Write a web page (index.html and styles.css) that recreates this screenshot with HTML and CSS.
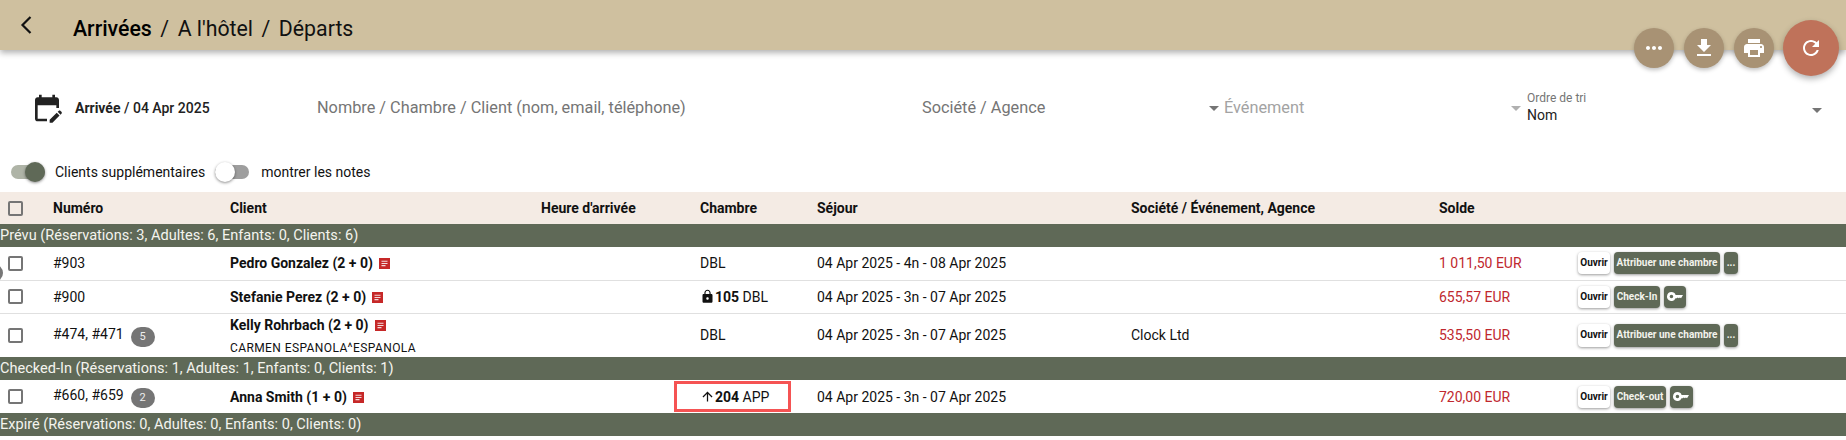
FILE: index.html
```html
<!DOCTYPE html>
<html lang="fr">
<head>
<meta charset="utf-8">
<title>Arrivées</title>
<link rel="stylesheet" href="styles.css">
</head>
<body>
<header class="topbar">
  <svg class="back" viewBox="0 0 12 18"><path d="M10.5 1 2.5 9l8 8" fill="none" stroke="#111" stroke-width="2.2"/></svg>
  <nav class="crumbs"><b>Arrivées</b><i>/</i><span>A l'hôtel</span><i>/</i><span>Départs</span></nav>
</header>
<div class="fabs">
  <button class="fab"><svg viewBox="0 0 24 24"><path d="M6 10c-1.1 0-2 .9-2 2s.9 2 2 2 2-.9 2-2-.9-2-2-2zm12 0c-1.1 0-2 .9-2 2s.9 2 2 2 2-.9 2-2-.9-2-2-2zm-6 0c-1.1 0-2 .9-2 2s.9 2 2 2 2-.9 2-2-.9-2-2-2z"/></svg></button>
  <button class="fab"><svg viewBox="0 0 24 24"><path d="M19 9h-4V3H9v6H5l7 7 7-7zM5 18v2h14v-2H5z"/></svg></button>
  <button class="fab"><svg viewBox="0 0 24 24"><path d="M19 8H5c-1.66 0-3 1.34-3 3v6h4v4h12v-4h4v-6c0-1.66-1.34-3-3-3zm-3 11H8v-5h8v5zm3-7c-.55 0-1-.45-1-1s.45-1 1-1 1 .45 1 1-.45 1-1 1zm-1-9H6v4h12V3z"/></svg></button>
  <button class="fab fab-main"><svg viewBox="0 0 24 24"><path d="M17.65 6.35C16.2 4.9 14.21 4 12 4c-4.42 0-7.99 3.58-7.99 8s3.57 8 7.99 8c3.73 0 6.84-2.55 7.73-6h-2.08c-.82 2.33-3.04 4-5.65 4-3.31 0-6-2.69-6-6s2.69-6 6-6c1.66 0 3.14.69 4.22 1.78L13 11h7V4l-2.35 2.35z"/></svg></button>
</div>
<span class="edge-dot"></span>

<section class="filters">
  <div class="f-date">
    <svg class="cal" viewBox="0 0 24 24"><path d="M5 10h14v2h2V6c0-1.1-.9-2-2-2h-1V2h-2v2H8V2H6v2H5c-1.11 0-1.99.9-1.99 2L3 20c0 1.1.89 2 2 2h7v-2H5V10zm17.84 6.28-.71.71-2.12-2.12.71-.71c.39-.39 1.02-.39 1.41 0l.71.71c.39.39.39 1.02 0 1.41zm-3.54-.7 2.12 2.12-5.3 5.3H14v-2.12l5.3-5.3z"/></svg>
    <span class="date-text"><b>Arrivée</b> / 04 Apr 2025</span>
  </div>
  <div class="f-search">Nombre / Chambre / Client (nom, email, téléphone)</div>
  <div class="f-company">Société / Agence<span class="caret"></span></div>
  <div class="f-event">Événement<span class="caret caret-light"></span></div>
  <div class="f-sort">
    <div class="sort-text"><small>Ordre de tri</small><span>Nom</span></div>
    <span class="caret"></span>
  </div>
</section>

<section class="toggles">
  <span class="toggle on"><span class="thumb"></span></span>
  <span class="t-label">Clients supplémentaires</span>
  <span class="toggle off"><span class="thumb"></span></span>
  <span class="t-label">montrer les notes</span>
</section>

<table class="grid">
  <colgroup>
    <col class="c1"><col class="c2"><col class="c3"><col class="c4"><col class="c5"><col class="c6"><col class="c7"><col class="c8"><col class="c9">
  </colgroup>
  <thead>
    <tr>
      <th class="chk"><span class="box"></span></th>
      <th>Numéro</th><th>Client</th><th>Heure d'arrivée</th><th>Chambre</th><th>Séjour</th><th>Société / Événement, Agence</th><th>Solde</th><th></th>
    </tr>
  </thead>
  <tbody>
    <tr class="group"><td colspan="9">Prévu (Réservations: 3, Adultes: 6, Enfants: 0, Clients: 6)</td></tr>
    <tr class="row">
      <td class="chk"><span class="box"></span></td>
      <td>#903</td>
      <td><b>Pedro Gonzalez (2 + 0)</b><svg class="note" viewBox="0 0 11 11"><path d="M0 0h11v11H0z" fill="#c62828"/><path d="M2.5 2.7h6v1.1h-6zM2.5 4.9h6V6h-6zM2.5 7.1h4v1.1h-4z" fill="#f3dcdc"/></svg></td>
      <td></td>
      <td>DBL</td>
      <td>04 Apr 2025 - 4n - 08 Apr 2025</td>
      <td></td>
      <td class="due">1 011,50 EUR</td>
      <td><div class="acts"><button class="btn light">Ouvrir</button><button class="btn w-assign">Attribuer une chambre</button><button class="btn w-more">...</button></div></td>
    </tr>
    <tr class="row">
      <td class="chk"><span class="box"></span></td>
      <td>#900</td>
      <td><b>Stefanie Perez (2 + 0)</b><svg class="note" viewBox="0 0 11 11"><path d="M0 0h11v11H0z" fill="#c62828"/><path d="M2.5 2.7h6v1.1h-6zM2.5 4.9h6V6h-6zM2.5 7.1h4v1.1h-4z" fill="#f3dcdc"/></svg></td>
      <td></td>
      <td><svg class="ric" viewBox="0 0 24 24"><path d="M18 8h-1V6c0-2.76-2.24-5-5-5S7 3.24 7 6v2H6c-1.1 0-2 .9-2 2v10c0 1.1.9 2 2 2h12c1.1 0 2-.9 2-2V10c0-1.1-.9-2-2-2zm-6 9c-1.1 0-2-.9-2-2s.9-2 2-2 2 .9 2 2-.9 2-2 2zm3.1-9H8.9V6c0-1.71 1.39-3.1 3.1-3.1 1.71 0 3.1 1.39 3.1 3.1v2z"/></svg><b>105</b> DBL</td>
      <td>04 Apr 2025 - 3n - 07 Apr 2025</td>
      <td></td>
      <td class="due">655,57 EUR</td>
      <td><div class="acts"><button class="btn light">Ouvrir</button><button class="btn w-in">Check-In</button><button class="btn key"><svg viewBox="0 0 18 10"><path d="M5 0a5 5 0 0 1 4.7 3.2H18L15.8 7l-1.3-1-1.2 1-1.2-1-1.2 1H9.6A5 5 0 1 1 5 0zm0 3a2 2 0 1 0 0 4 2 2 0 0 0 0-4z" fill-rule="evenodd"/></svg></button></div></td>
    </tr>
    <tr class="row tall">
      <td class="chk"><span class="box"></span></td>
      <td>#474, #471<span class="pill">5</span></td>
      <td><b>Kelly Rohrbach (2 + 0)</b><svg class="note" viewBox="0 0 11 11"><path d="M0 0h11v11H0z" fill="#c62828"/><path d="M2.5 2.7h6v1.1h-6zM2.5 4.9h6V6h-6zM2.5 7.1h4v1.1h-4z" fill="#f3dcdc"/></svg><div class="sub">CARMEN ESPANOLA^ESPANOLA</div></td>
      <td></td>
      <td>DBL</td>
      <td>04 Apr 2025 - 3n - 07 Apr 2025</td>
      <td>Clock Ltd</td>
      <td class="due">535,50 EUR</td>
      <td><div class="acts high"><button class="btn light">Ouvrir</button><button class="btn w-assign">Attribuer une chambre</button><button class="btn w-more">...</button></div></td>
    </tr>
    <tr class="group"><td colspan="9">Checked-In (Réservations: 1, Adultes: 1, Enfants: 0, Clients: 1)</td></tr>
    <tr class="row last">
      <td class="chk"><span class="box"></span></td>
      <td>#660, #659<span class="pill">2</span></td>
      <td><b>Anna Smith (1 + 0)</b><svg class="note" viewBox="0 0 11 11"><path d="M0 0h11v11H0z" fill="#c62828"/><path d="M2.5 2.7h6v1.1h-6zM2.5 4.9h6V6h-6zM2.5 7.1h4v1.1h-4z" fill="#f3dcdc"/></svg></td>
      <td></td>
      <td class="marked"><svg class="ric" viewBox="0 0 24 24"><path d="M4 12l1.41 1.41L11 7.83V20h2V7.83l5.58 5.59L20 12l-8-8-8 8z"/></svg><b>204</b> APP</td>
      <td>04 Apr 2025 - 3n - 07 Apr 2025</td>
      <td></td>
      <td class="due">720,00 EUR</td>
      <td><div class="acts"><button class="btn light">Ouvrir</button><button class="btn w-out">Check-out</button><button class="btn key key-b"><svg viewBox="0 0 18 10"><path d="M5 0a5 5 0 0 1 4.7 3.2H18L15.8 7l-1.3-1-1.2 1-1.2-1-1.2 1H9.6A5 5 0 1 1 5 0zm0 3a2 2 0 1 0 0 4 2 2 0 0 0 0-4z" fill-rule="evenodd"/></svg></button></div></td>
    </tr>
    <tr class="group"><td colspan="9">Expiré (Réservations: 0, Adultes: 0, Enfants: 0, Clients: 0)</td></tr>
  </tbody>
</table>
</body>
</html>
```
FILE: styles.css
```css
* { box-sizing: border-box; }
html, body { margin: 0; padding: 0; height: 440px; overflow: hidden; }
body { position: relative; background: #fff; color: #111; font: 14px/20px Roboto, sans-serif; }

.topbar {
  height: 50px; background: #cfc09f; display: flex; align-items: center;
  padding-left: 20px; box-shadow: 0 3px 6px rgba(0,0,0,.3);
}
.back { width: 12px; height: 18px; flex: none; }
.crumbs { margin: 8px 0 0 41px; font-size: 21.3px; line-height: 28px; display: flex; color: #111; }
.crumbs b { font-weight: 500; color: #000; }
.crumbs i { font-style: normal; margin: 0 8.5px; }

.fabs { position: absolute; top: 20px; left: 1634px; display: flex; align-items: center; gap: 10px; }
.fab {
  width: 40px; height: 40px; border: 0; border-radius: 50%; padding: 8px; background: #a89274;
  box-shadow: 0 2px 4px rgba(0,0,0,.25); display: flex;
}
.fab svg { width: 24px; height: 24px; fill: #fff; }
.fab-main { width: 56px; height: 56px; padding: 16px; background: #bf725a; margin-left: -1px; box-shadow: 0 3px 6px rgba(0,0,0,.3); }
.edge-dot { position: absolute; left: -15px; top: 264px; width: 18px; height: 18px; border-radius: 50%; background: #777; z-index: 2; }

.filters { height: 85px; display: flex; align-items: center; position: relative; padding-top: 31px; color: #757575; font-size: 16.3px; }
.filters > div { display: flex; align-items: center; }
.f-date { width: 317px; padding-left: 31px; color: #222; }
.cal { width: 32px; height: 32px; fill: #222; flex: none; }
.date-text { margin-left: 12px; font-size: 14px; font-weight: 500; white-space: nowrap; }
.date-text b { font-weight: 700; }
.f-search { width: 605px; }
.f-company { width: 302px; position: relative; }
.f-event { width: 303px; color: #a3a3a3; position: relative; }
.f-sort { flex: 1; position: relative; }
.caret { position: absolute; width: 0; height: 0; border: 5px solid transparent; border-top-color: #757575; border-bottom: 0; top: 50%; margin-top: -2px; }
.f-company .caret { right: 5px; }
.f-event .caret { right: 6px; }
.caret-light { border-top-color: #b0b0b0; }
.f-sort .caret { right: 24px; margin-top: 0; }
.sort-text { display: flex; flex-direction: column; margin-top: -3px; }
.sort-text small { font-size: 12px; line-height: 16px; color: #757575; }
.sort-text span { font-size: 14px; line-height: 18px; color: #222; }

.toggles { height: 57px; display: flex; align-items: center; padding: 17px 0 0 11px; }
.toggle { position: relative; width: 34px; height: 14px; border-radius: 7px; flex: none; }
.toggle.on { background: #afb4a7; }
.toggle.off { background: #9e9e9e; margin-left: 10px; width: 34px; }
.thumb { position: absolute; top: -3px; width: 20px; height: 20px; border-radius: 50%; box-shadow: 0 1px 3px rgba(0,0,0,.45); }
.on .thumb { right: 0; background: #5f6957; }
.off .thumb { left: 0; background: #fff; }
.t-label { margin-left: 10px; color: #111; white-space: nowrap; }
.toggle.off + .t-label { margin-left: 12px; }

.grid { width: 1846px; border-collapse: collapse; table-layout: fixed; position: relative; }
.c1 { width: 53px; } .c2 { width: 177px; } .c3 { width: 311px; } .c4 { width: 159px; } .c5 { width: 117px; }
.c6 { width: 314px; } .c7 { width: 308px; } .c8 { width: 139px; } .c9 { width: 268px; }
.grid th, .grid td { padding: 0; text-align: left; white-space: nowrap; }
.grid thead tr { height: 32px; background: #f4ebe4; }
.grid th { font-weight: 700; font-size: 14px; color: #111; }
.grid th.chk, .grid td.chk { padding-left: 8px; line-height: 0; }
.box { display: inline-block; width: 15px; height: 15px; border: 2px solid #757575; border-radius: 2px; }

.group { height: 23px; background: #5f6957; color: #f4f4ee; font-size: 14.55px; }
.row { height: 33px; border-bottom: 1px solid #e0e0e0; }
.row.tall { height: 44px; border-bottom: 0; }
.row.last { border-bottom: 0; }
.grid b { font-weight: 700; }
.note { width: 11px; height: 11px; margin-left: 6px; vertical-align: -1px; }
.sub { font-size: 12px; line-height: 16px; margin-top: 5px; letter-spacing: .4px; }
.ric { width: 15px; height: 15px; vertical-align: -2px; fill: #111; }
.pill { display: inline-block; width: 24px; height: 20px; margin-left: 7px; border-radius: 10px; background: #757575; color: #eee; font-size: 11px; line-height: 20px; text-align: center; vertical-align: -1px; }
.due { color: #c0282e; }
.marked { position: relative; }
.marked::after { content: ""; position: absolute; box-sizing: border-box; left: -26px; top: 1px; bottom: 1px; width: 117px; border: 3px solid #f55353; }

.acts { display: flex; gap: 4px; align-items: center; }
.btn {
  height: 22px; border: 0; border-radius: 4px; padding: 0; background: #5f6957; color: #f3f3ec;
  font: 700 10px/22px Roboto, sans-serif; box-shadow: 0 1px 3px rgba(0,0,0,.4); white-space: nowrap; text-align: center;
}
.acts.high .btn { height: 23px; }
.btn.light { width: 32px; background: #fff; color: #111; }
.w-assign { width: 106px; }
.w-more { width: 14px; }
.w-in { width: 46px; }
.w-out { width: 52px; }
.btn.key { width: 22px; padding: 0 3px; display: flex; align-items: center; }
.btn.key svg { width: 16px; height: 9px; fill: #fff; }
.btn.key-b { width: 23px; }
```
